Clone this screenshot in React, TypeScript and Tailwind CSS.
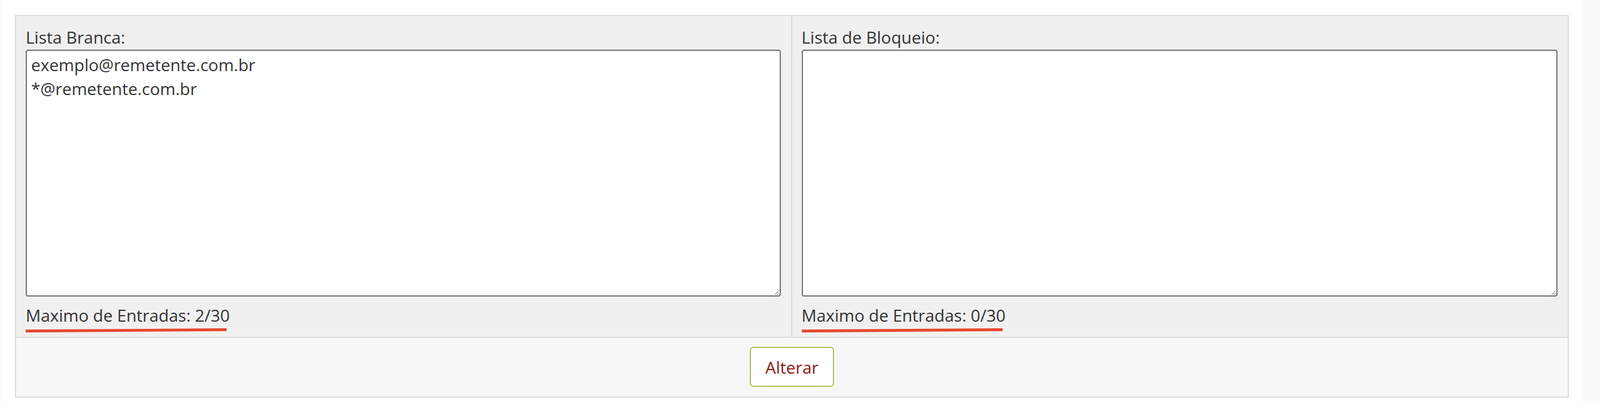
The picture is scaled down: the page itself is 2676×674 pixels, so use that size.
import React from "react"

const lists = [
  { label: "Lista Branca:", value: "exemplo@remetente.com.br\n*@remetente.com.br", used: 2 },
  { label: "Lista de Bloqueio:", value: "", used: 0 },
]

function Underline() {
  return (
    <svg
      className="pointer-events-none absolute left-[-1px] top-[40px]"
      width="340"
      height="10"
      viewBox="0 0 340 10"
    >
      <path d="M1 6.6 L337 4.4" stroke="#e8452c" strokeWidth="4.6" fill="none" />
    </svg>
  )
}

function ListCell({ label, value, used, divider }: { label: string; value: string; used: number; divider?: boolean }) {
  return (
    <div className={`pl-[16px] pr-[17px] pt-[15px] pb-[16px] ${divider ? "border-r-2 border-[#dddddd]" : ""}`}>
      <label className="block h-[40px]">{label}</label>
      <textarea
        readOnly
        defaultValue={value}
        className="mt-[1px] block h-[413px] w-full rounded-[4px] border-2 border-[#767676] bg-white px-[7px] py-[3px] text-[28px] leading-[40px] text-[#333] outline-none"
      />
      <div className="relative mt-[11px] h-[40px] w-max">
        Maximo de Entradas: {used}/30
        <Underline />
      </div>
    </div>
  )
}

export default function App() {
  return (
    <div className="flex h-[674px] w-full bg-white font-['Open_Sans',sans-serif] text-[28px] leading-[40px] text-[#333]">
      <div className="w-[5px] bg-[#fafafa]" />

      <div className="flex-1 pl-[20px] pr-[21px] pt-[25px]">
        <div className="border-2 border-[#dddddd]">
          <div className="grid grid-cols-2 bg-[#f0f0f0]">
            {lists.map((l, i) => (
              <ListCell key={l.label} label={l.label} value={l.value} used={l.used} divider={i === 0} />
            ))}
          </div>

          {/* footer */}
          <div className="flex justify-center border-t-2 border-[#dddddd] bg-[#f7f7f7] pt-[15px] pb-[16px]">
            <button className="h-[67px] rounded-[6px] border-2 border-[#a9c35e] bg-white px-[24px] text-[28px] leading-[40px] text-[#8b1a13]">
              Alterar
            </button>
          </div>
        </div>
      </div>

      <div className="w-[31px] bg-[#fafafa]" />
    </div>
  )
}
